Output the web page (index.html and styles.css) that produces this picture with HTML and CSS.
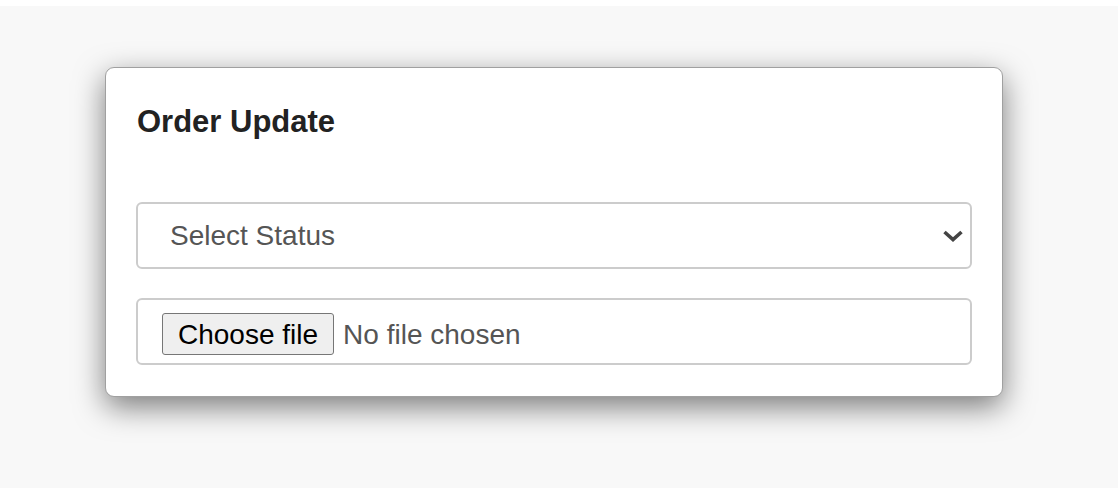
FILE: index.html
```html
<!DOCTYPE html>
<html lang="en">
<head>
<meta charset="utf-8">
<title>Order Update</title>
<link rel="stylesheet" href="styles.css">
</head>
<body>
<div class="page">
  <div class="card">
    <h4 class="card-title">Order Update</h4>
    <div class="select-box">
      <span class="select-text">Select Status</span>
      <svg class="chevron" width="22" height="14" viewBox="0 0 22 14" aria-hidden="true">
        <polyline points="2.5,3 11,10.5 19.5,3" fill="none" stroke="#444" stroke-width="3.6"/>
      </svg>
    </div>
    <div class="file-box">
      <span class="file-btn">Choose file</span>
      <span class="file-text">No file chosen</span>
    </div>
  </div>
</div>
</body>
</html>
```

FILE: styles.css
```css
html, body {
  margin: 0;
  padding: 0;
  background: #ffffff;
}

body {
  font-family: "Liberation Sans", Arial, sans-serif;
}

.page {
  margin-top: 6px;
  height: 482px;
  background: #f8f8f8;
  padding-top: 61px;
  padding-left: 105px;
  box-sizing: border-box;
}

.card {
  width: 898px;
  box-sizing: border-box;
  background: #ffffff;
  border: 1px solid #a0a0a0;
  border-radius: 9px;
  box-shadow: 0 10px 30px rgba(0, 0, 0, 0.5);
  padding: 37px 30px 31px 30px;
}

.card-title {
  margin: 0 0 0 1px;
  font-size: 31px;
  line-height: 33px;
  font-weight: bold;
  color: #222222;
}

.select-box {
  margin-top: 64px;
  height: 67px;
  box-sizing: border-box;
  border: 2px solid #cccccc;
  border-radius: 6px;
  display: flex;
  align-items: center;
  justify-content: space-between;
  padding: 1px 6px 0 32px;
}

.select-text {
  font-size: 28px;
  color: #555555;
}

.chevron {
  display: block;
}

.file-box {
  margin-top: 29px;
  height: 67px;
  box-sizing: border-box;
  border: 2px solid #cccccc;
  border-radius: 6px;
  display: flex;
  align-items: flex-start;
  padding: 13px 24px 0 24px;
}

.file-btn {
  display: block;
  height: 42px;
  box-sizing: border-box;
  padding: 0 15px;
  border: 1px solid #767676;
  border-radius: 3px;
  background: #efefef;
  color: #000000;
  font-size: 28px;
  line-height: 41px;
}

.file-text {
  margin-left: 9px;
  font-size: 28px;
  line-height: 43px;
  color: #555555;
}
```
